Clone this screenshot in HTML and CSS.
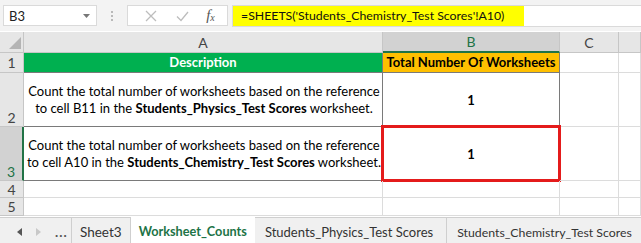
FILE: index.html
```html
<!DOCTYPE html>
<html lang="en">
<head>
    <meta charset="UTF-8">
    <title>SHEETS function - Worksheet_Counts</title>
    <link rel="stylesheet" href="styles.css">
</head>
<body>

<div class="formula-bar">
    <div class="name-box">
        <span>B3</span>
        <svg class="caret" width="7" height="4" viewBox="0 0 7 4"><path d="M0 0h7L3.5 4z" fill="#777"/></svg>
    </div>
    <div class="grip"><i></i><i></i><i></i></div>
    <div class="fx-buttons">
        <svg width="14" height="14" viewBox="0 0 14 14"><path d="M2 2l10 10M12 2L2 12" stroke="#bdbdbd" stroke-width="1.3" fill="none"/></svg>
        <svg width="15" height="14" viewBox="0 0 15 14"><path d="M2 7.5l4 4L13 3" stroke="#bdbdbd" stroke-width="1.3" fill="none"/></svg>
        <span class="fx">f<sub>x</sub></span>
    </div>
    <div class="formula-input">
        <span class="formula">=SHEETS('Students_Chemistry_Test Scores'!A10)</span>
    </div>
</div>

<div class="sheet">
    <div class="hdr corner"><svg width="12" height="12" viewBox="0 0 12 12"><path d="M12 0v12H0z" fill="#b4b4b4"/></svg></div>
    <div class="hdr col">A</div>
    <div class="hdr col selected">B</div>
    <div class="hdr col">C</div>
    <div class="hdr col"></div>

    <div class="hdr row">1</div>
    <div class="cell title">Description</div>
    <div class="cell title orange">Total Number Of Worksheets</div>
    <div class="cell"></div>
    <div class="cell"></div>

    <div class="hdr row bottom">2</div>
    <div class="cell text"><p>Count the total number of worksheets based on the reference<br>to cell B11 in the <b>Students_Physics_Test Scores</b> worksheet.</p></div>
    <div class="cell value">1</div>
    <div class="cell"></div>
    <div class="cell"></div>

    <div class="hdr row bottom selected">3</div>
    <div class="cell text"><p>Count the total number of worksheets based on the reference<br>to cell A10 in the <b>Students_Chemistry_Test Scores</b> worksheet.</p></div>
    <div class="cell value active">1</div>
    <div class="cell"></div>
    <div class="cell"></div>

    <div class="hdr row">4</div>
    <div class="cell"></div>
    <div class="cell"></div>
    <div class="cell"></div>
    <div class="cell"></div>

    <div class="hdr row">5</div>
    <div class="cell"></div>
    <div class="cell"></div>
    <div class="cell"></div>
    <div class="cell"></div>
</div>

<div class="tabs">
    <div class="nav">
        <svg width="5" height="8" viewBox="0 0 5 8"><path d="M5 0v8L0 4z" fill="#555"/></svg>
        <svg width="5" height="8" viewBox="0 0 5 8"><path d="M0 0v8l5-4z" fill="#c8c8c8"/></svg>
        <span class="more">...</span>
    </div>
    <div class="tab">Sheet3</div>
    <div class="tab current">Worksheet_Counts</div>
    <div class="tab wide">Students_Physics_Test Scores</div>
    <div class="tab wide last">Students_Chemistry_Test Scores</div>
</div>

</body>
</html>
```

FILE: styles.css
```css
body {
    margin: 0;
    width: 641px;
    height: 243px;
    overflow: hidden;
    background: #fff;
    font-family: Lato, "Open Sans", sans-serif;
    color: #000;
}

/* formula bar */
.formula-bar {
    height: 31px;
    background: #f3f3f3;
    display: flex;
    align-items: center;
    padding-left: 3px;
    box-sizing: border-box;
}

.name-box {
    width: 94px;
    height: 21px;
    background: #fff;
    border: 1px solid #dadada;
    box-sizing: border-box;
    display: flex;
    align-items: center;
    justify-content: space-between;
    padding: 0 6px 0 5px;
    font-size: 13px;
    color: #222;
}

.grip {
    width: 30px;
    display: flex;
    flex-direction: column;
    align-items: center;
    gap: 2px;
}

.grip i {
    width: 2px;
    height: 2px;
    background: #b9b9b9;
}

.fx-buttons {
    width: 101px;
    height: 21px;
    background: #fff;
    border: 1px solid #dadada;
    box-sizing: border-box;
    display: flex;
    align-items: center;
    justify-content: space-around;
    padding: 0 4px 0 8px;
}

.fx {
    font-family: "Liberation Serif", serif;
    font-style: italic;
    font-size: 15px;
    color: #555;
}

.fx sub {
    font-size: 10px;
    vertical-align: -1px;
}

.formula-input {
    flex: 1;
    height: 22px;
    margin-left: 4px;
    background: #fff;
    border: 1px solid #dadada;
    border-right: none;
    box-sizing: border-box;
    display: flex;
}

.formula {
    background: #ffff00;
    padding: 0 20px 0 8px;
    font-size: 12.3px;
    line-height: 20px;
    color: #111;
    white-space: nowrap;
}

/* grid of cells */
.sheet {
    display: grid;
    grid-template-columns: 24px 359px 177px 59px 1fr;
    grid-template-rows: 21px 20px 54px 54px 17px 18px;
    margin-top: 1px;
    font-size: 13px;
}

.hdr {
    background: #e6e6e6;
    color: #444;
    border-right: 1px solid #c6c6c6;
    border-bottom: 1px solid #c6c6c6;
    box-sizing: border-box;
    display: flex;
    align-items: center;
    justify-content: center;
    font-size: 14px;
}

.hdr.corner {
    align-items: flex-end;
    justify-content: flex-end;
    padding: 0 2px 3px 0;
}

.hdr.col.selected {
    background: #d2d2d2;
    color: #217346;
    border-bottom: 2px solid #217346;
}

.hdr.row.bottom {
    align-items: flex-end;
}

.hdr.row.selected {
    background: #d2d2d2;
    color: #217346;
    border-right: 2px solid #217346;
}

.cell {
    border-right: 1px solid #dcdcdc;
    border-bottom: 1px solid #dcdcdc;
    box-sizing: border-box;
    position: relative;
}

.cell.title {
    background: #00b050;
    color: #fff;
    font-weight: bold;
    text-align: center;
    line-height: 19px;
    white-space: nowrap;
    border-color: #7a7a7a;
}

.cell.title.orange {
    background: #ffc000;
    color: #000;
}

.cell.text {
    display: flex;
    align-items: center;
    justify-content: center;
    border-color: #7a7a7a;
}

.cell.text p {
    margin: 0 0 0 2px;
    text-align: center;
    line-height: 17px;
    white-space: nowrap;
}

.cell.value {
    display: flex;
    align-items: center;
    justify-content: center;
    font-weight: bold;
    border-color: #7a7a7a;
}

.cell.active::after {
    content: "";
    position: absolute;
    left: -2px;
    right: -2px;
    top: -2px;
    bottom: -2px;
    border: 3px solid #e41b1b;
}

/* sheet tabs */
.tabs {
    height: 28px;
    background: #f0f0f0;
    border-top: 1px solid #cfcfcf;
    margin-top: 1px;
    display: flex;
    align-items: stretch;
    font-size: 13.5px;
    color: #333;
    white-space: nowrap;
}

.nav {
    width: 72px;
    flex-shrink: 0;
    display: flex;
    align-items: center;
    gap: 14px;
    padding-left: 17px;
    box-sizing: border-box;
    border-right: 1px solid #cfcfcf;
}

.more {
    font-weight: bold;
    color: #555;
    letter-spacing: 1px;
}

.tab {
    display: flex;
    align-items: center;
    padding: 0 8px;
    border-right: 1px solid #cfcfcf;
}

.tab.wide {
    font-size: 13px;
    padding: 0 13px 0 10px;
}

.tab.wide.last {
    font-size: 12.3px;
    padding-left: 10px;
    border-right: none;
}

.tab.current {
    background: #fff;
    color: #217346;
    font-weight: bold;
    font-size: 12.7px;
    border-right: none;
    border-bottom: 2px solid #217346;
    margin-top: -1px;
}
```
